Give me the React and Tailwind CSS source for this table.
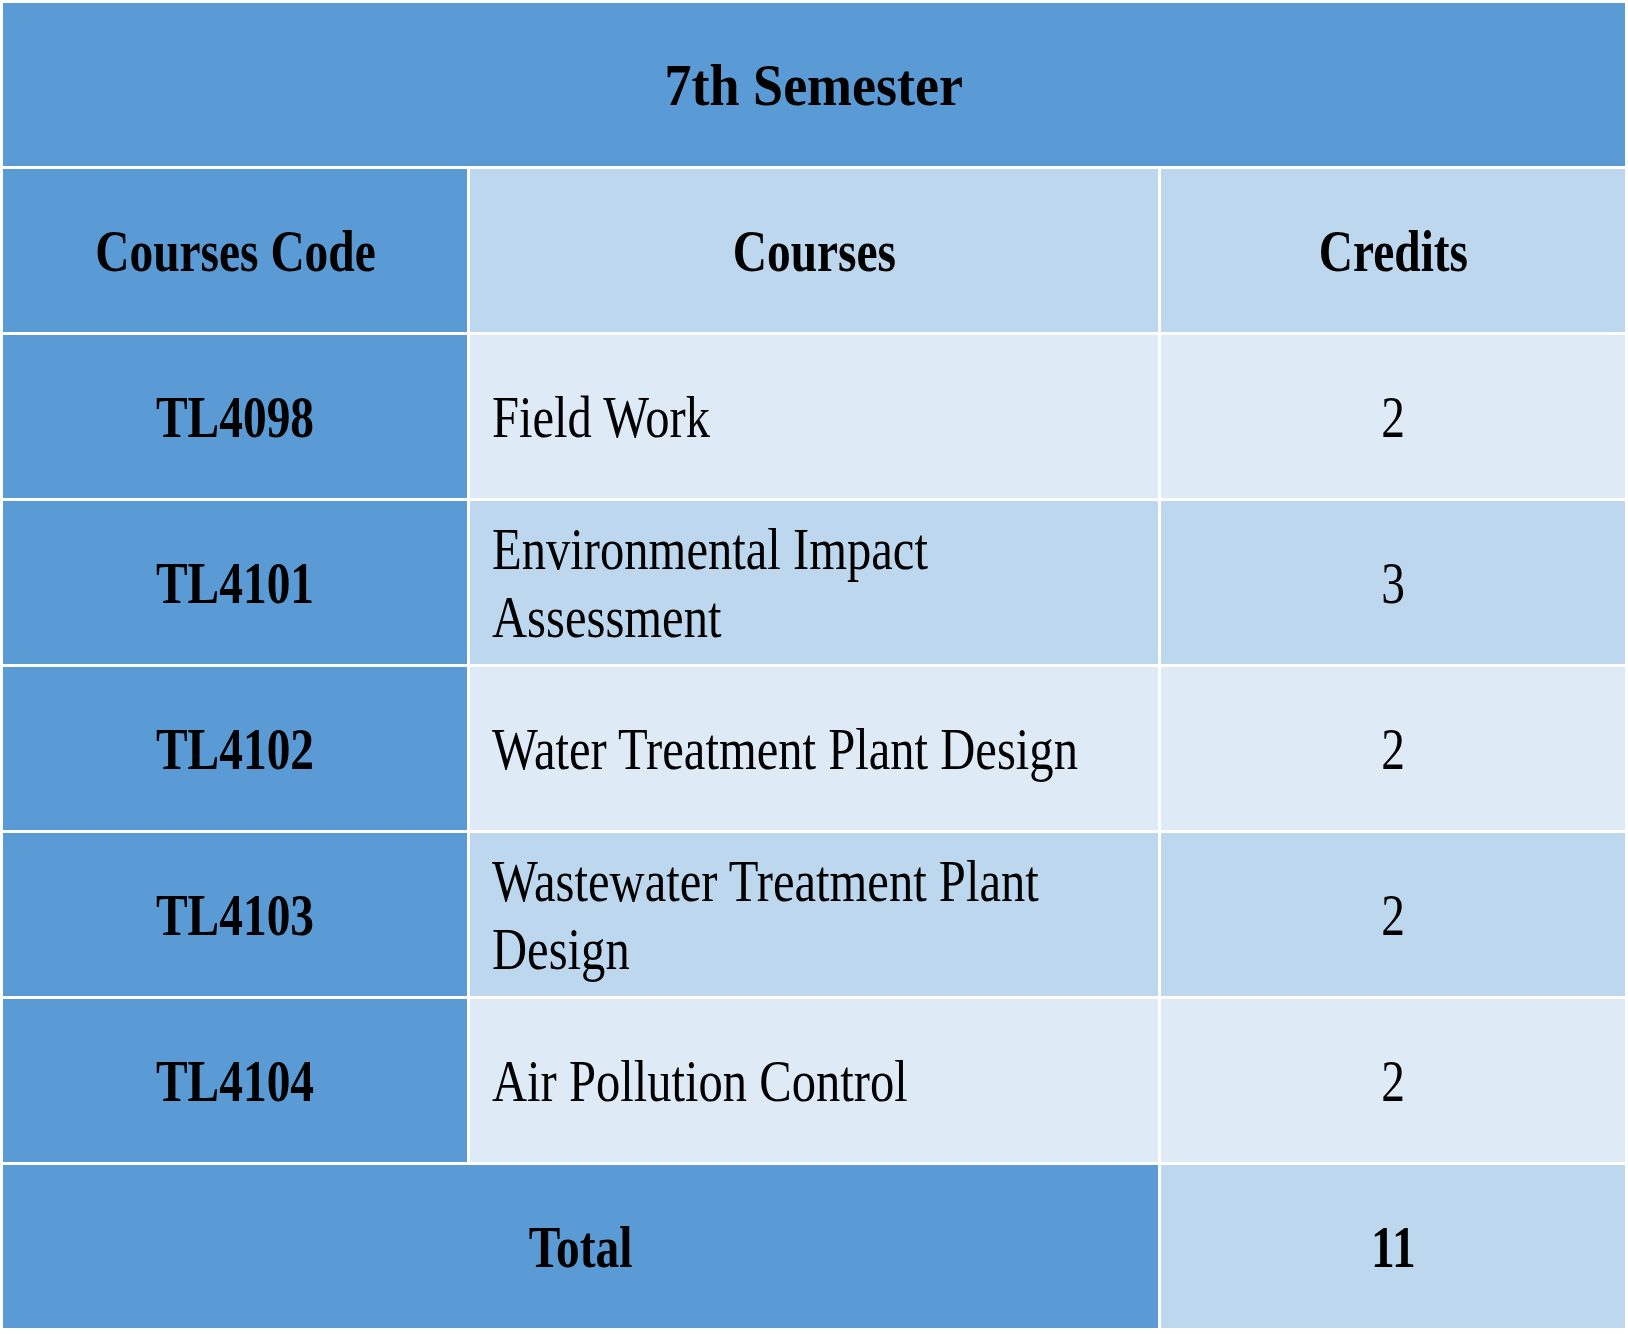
import React from "react";

const rows = [
    { code: "TL4098", lines: ["Field Work"], credits: "2", tint: "light" },
    { code: "TL4101", lines: ["Environmental Impact", "Assessment"], credits: "3", tint: "mid" },
    { code: "TL4102", lines: ["Water Treatment Plant Design"], credits: "2", tint: "light" },
    { code: "TL4103", lines: ["Wastewater Treatment Plant", "Design"], credits: "2", tint: "mid" },
    { code: "TL4104", lines: ["Air Pollution Control"], credits: "2", tint: "light" },
];

const Squeeze = ({ children, bold, left }) => (
    <span
        className={
            "inline-block whitespace-nowrap " +
            (left ? "origin-left scale-x-[0.81] " : "origin-center scale-x-[0.79] ") +
            (bold ? "font-bold" : "font-normal")
        }
    >
        {children}
    </span>
);

const App = () => {
    return (
        <div className="w-[1628px] h-[1334px] bg-white font-['Liberation_Serif',serif] text-black text-[60px]">
            <div className="grid grid-cols-[464px_688px_464px] grid-rows-[repeat(8,163px)] gap-[3px] p-[3px]">
                {/* Judul semester */}
                <div className="col-span-3 bg-[#5b9bd5] flex items-center justify-center">
                    <span className="inline-block whitespace-nowrap font-bold scale-x-[0.9]">
                        7th Semester
                    </span>
                </div>

                {/* Header */}
                <div className="bg-[#5b9bd5] flex items-center justify-center">
                    <Squeeze bold>Courses Code</Squeeze>
                </div>
                <div className="bg-[#bdd7ee] flex items-center justify-center">
                    <Squeeze bold>Courses</Squeeze>
                </div>
                <div className="bg-[#bdd7ee] flex items-center justify-center">
                    <Squeeze bold>Credits</Squeeze>
                </div>

                {/* Mata kuliah */}
                {rows.map((row) => {
                    const bg = row.tint === "mid" ? "bg-[#bdd7ee]" : "bg-[#deeaf6]";
                    return (
                        <React.Fragment key={row.code}>
                            <div className="bg-[#5b9bd5] flex items-center justify-center">
                                <Squeeze bold>{row.code}</Squeeze>
                            </div>
                            <div className={bg + " flex flex-col justify-center pl-[22px] leading-[68px]"}>
                                {row.lines.map((line) => (
                                    <div key={line}>
                                        <Squeeze left>{line}</Squeeze>
                                    </div>
                                ))}
                            </div>
                            <div className={bg + " flex items-center justify-center"}>
                                <Squeeze>{row.credits}</Squeeze>
                            </div>
                        </React.Fragment>
                    );
                })}

                {/* Total */}
                <div className="col-span-2 bg-[#5b9bd5] flex items-center justify-center">
                    <Squeeze bold>Total</Squeeze>
                </div>
                <div className="bg-[#bdd7ee] flex items-center justify-center">
                    <Squeeze bold>11</Squeeze>
                </div>
            </div>
        </div>
    );
};

export default App;
